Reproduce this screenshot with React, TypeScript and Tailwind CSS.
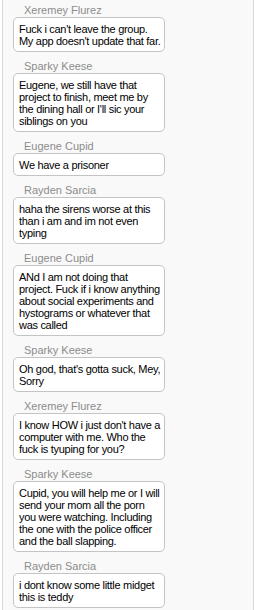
import React from "react";

const messages = [
  { name: "Xeremey Flurez", lines: ["Fuck i can't leave the group.", "My app doesn't update that far."] },
  { name: "Sparky Keese", lines: ["Eugene, we still have that", "project to finish, meet me by", "the dining hall or I'll sic your", "siblings on you"] },
  { name: "Eugene Cupid", lines: ["We have a prisoner"] },
  { name: "Rayden Sarcia", lines: ["haha the sirens worse at this", "than i am and im not even", "typing"] },
  { name: "Eugene Cupid", lines: ["ANd I am not doing that", "project. Fuck if i know anything", "about social experiments and", "hystograms or whatever that", "was called"] },
  { name: "Sparky Keese", lines: ["Oh god, that's gotta suck, Mey,", "Sorry"] },
  { name: "Xeremey Flurez", lines: ["I know HOW i just don't have a", "computer with me. Who the", "fuck is tyuping for you?"] },
  { name: "Sparky Keese", lines: ["Cupid, you will help me or I will", "send your mom all the porn", "you were watching. Including", "the one with the police officer", "and the ball slapping."] },
  { name: "Rayden Sarcia", lines: ["i dont know some little midget", "this is teddy"] },
];

function Message({ name, lines }: { name: string; lines: string[] }) {
  return (
    <div className="pt-1 pb-1 pl-[10px]">
      <div className="pl-[11px] text-[11px] leading-[13px] text-[#8c8c8c]">{name}</div>
      <div className="w-[152px] rounded-[5px] border border-[#c4c4c4] bg-white pl-[5px] pr-[4px] pt-[5px] pb-[4px] text-[11px] leading-[12px] tracking-[-0.3px] text-black">
        {lines.map((l, i) => (
          <div key={i} className="whitespace-nowrap">{l}</div>
        ))}
      </div>
    </div>
  );
}

export default function App() {
  return (
    <div className="h-[610px] overflow-hidden bg-white px-[2px]" style={{ fontFamily: '"Liberation Sans", Arial, sans-serif' }}>
      <div className="h-full border-x border-[#d9d9d9] bg-[#f9f9f9]">
        {messages.map((m, i) => (
          <Message key={i} name={m.name} lines={m.lines} />
        ))}
      </div>
    </div>
  );
}
